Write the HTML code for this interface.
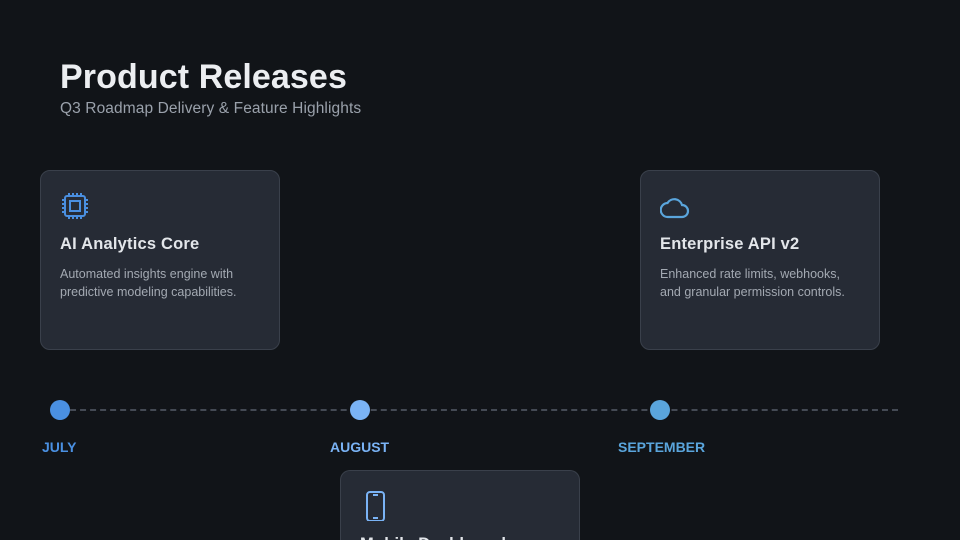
<!DOCTYPE html>
<html><head><meta charset="utf-8"><style>
*{margin:0;padding:0;box-sizing:border-box}
html{width:960px;height:540px;overflow:hidden;background:#111418}
body{width:960px;height:540px;background:#111418;font-family:"Liberation Sans",sans-serif;position:relative;overflow:hidden}
h1{position:absolute;left:60px;top:58px;font-size:34px;font-weight:700;color:#eceef1;letter-spacing:0.1px}
.sub{position:absolute;left:60px;top:100px;font-size:15.5px;color:#9aa1ab;letter-spacing:0.1px}
.card{position:absolute;width:240px;height:180px;background:#262b35;border:1px solid #3a404b;border-radius:10px;padding:20px 19px;overflow:hidden}
.card svg{display:block;width:30px;height:30px;margin-bottom:14px}
.card h3{font-size:16.5px;font-weight:700;color:#e3e6ea;margin-bottom:11px;letter-spacing:0.2px}
.card p{font-size:12.5px;line-height:18px;color:#a3a9b2}
.line{position:absolute;left:60px;top:409px;width:838px;border-top:2px dashed #444a54}
.dot{position:absolute;top:400px;width:20px;height:20px;border-radius:50%}
.m{position:absolute;top:439px;font-size:14px;font-weight:700}
</style></head><body>
<h1>Product Releases</h1>
<div class="sub">Q3 Roadmap Delivery &amp; Feature Highlights</div>
<div class="card" style="left:40px;top:170px">
<svg viewBox="0 0 30 30" fill="none" stroke="#4a8fe0" stroke-width="2"><rect x="5" y="5" width="20" height="20" rx="2"/><rect x="10" y="10" width="10" height="10"/><path d="M9 2v3M13 2v3M17 2v3M21 2v3M9 25v3M13 25v3M17 25v3M21 25v3M2 9h3M2 13h3M2 17h3M2 21h3M25 9h3M25 13h3M25 17h3M25 21h3"/></svg>
<h3>AI Analytics Core</h3><p>Automated insights engine with predictive modeling capabilities.</p></div>
<div class="card" style="left:640px;top:170px">
<svg viewBox="0 0 30 30" fill="none" stroke="#5aa5dc" stroke-width="2.2"><path d="M8 26h14a6 6 0 0 0 0-12 8 8 0 0 0-14.5-2A6.5 6.5 0 0 0 8 26z"/></svg>
<h3>Enterprise API v2</h3><p>Enhanced rate limits, webhooks, and granular permission controls.</p></div>
<div class="card" style="left:340px;top:470px;height:70px;border-bottom:none;border-radius:10px 10px 0 0">
<svg viewBox="0 0 30 30" fill="none" stroke="#7ab3f5" stroke-width="2"><rect x="7" y="1" width="17" height="29" rx="3"/><path d="M13 4h5M13 27h5"/></svg>
<h3>Mobile Dashboard</h3></div>
<div class="line"></div>
<div class="dot" style="left:50px;background:#4a90e2"></div>
<div class="dot" style="left:350px;background:#7ab3f5"></div>
<div class="dot" style="left:650px;background:#5aa5dc"></div>
<div class="m" style="left:42px;color:#4a90e2">JULY</div>
<div class="m" style="left:330px;color:#7ab3f5">AUGUST</div>
<div class="m" style="left:618px;color:#5aa5dc">SEPTEMBER</div>
</body></html>
